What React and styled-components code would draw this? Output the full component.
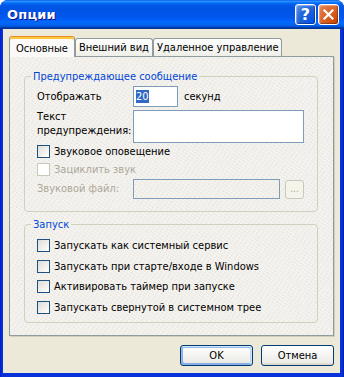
import React from 'react'
import styled, { createGlobalStyle } from 'styled-components'

const GlobalStyle = createGlobalStyle`
  html, body { margin: 0; padding: 0; background: #fff; }
  body {
    font-family: Tahoma, "DejaVu Sans Condensed", "Liberation Sans", sans-serif;
    font-size: 11px;
    color: #000;
  }
`

const Window = styled.div`
  width: 344px;
  height: 377px;
  box-sizing: border-box;
  display: flex;
  flex-direction: column;
  background: linear-gradient(to right, #0019cf 0, #0831d9 2px, #0831d9 calc(100% - 2px), #001ea0 100%);
  border-radius: 8px 8px 0 0;
  overflow: hidden;
`

const TitleBar = styled.div`
  height: 29px;
  flex: none;
  display: flex;
  align-items: center;
  padding: 0 5px 0 7px;
  background: linear-gradient(180deg, #0058ee 0%, #3593ff 4%, #288eff 6%, #127dff 8%, #036ffc 10%, #0262ee 14%, #0057e5 20%, #0054e3 24%, #0055eb 56%, #005bf5 66%, #026afe 76%, #0062ef 86%, #0052d6 92%, #0040ab 94%, #003092 100%);
`

const Title = styled.div`
  flex: 1;
  color: #fff;
  font-family: "DejaVu Sans", sans-serif;
  font-weight: bold;
  font-size: 13px;
  letter-spacing: 0.2px;
  text-shadow: 1px 1px #0f1089;
`

const CaptionButton = styled.button`
  width: 21px;
  height: 21px;
  margin-left: 2px;
  padding: 0;
  border: 1px solid #fff;
  border-radius: 3px;
  display: flex;
  align-items: center;
  justify-content: center;
  color: #fff;
  font-family: "DejaVu Sans", sans-serif;
  font-weight: bold;
  font-size: 16px;
  background: ${p => p.$close
    ? 'radial-gradient(circle at 90% 90%, #cc4600 0%, #dc6527 55%, #e08a5e 100%)'
    : 'radial-gradient(circle at 90% 90%, #0054e9 0%, #2263d5 55%, #6696eb 100%)'};
  box-shadow: inset -1px -1px 1px rgba(0, 0, 40, 0.35), inset 1px 1px 1px rgba(255, 255, 255, 0.35);
`

const Body = styled.div`
  flex: 1;
  margin: 0 4px 4px 3px;
  background: #ece9d8;
  padding: 7px 6px 7px 6px;
  display: flex;
  flex-direction: column;
`

const TabStrip = styled.div`
  display: flex;
  align-items: flex-end;
  height: 21px;
  margin-bottom: -1px;
  position: relative;
  z-index: 1;
`

const Tab = styled.div`
  box-sizing: border-box;
  height: ${p => (p.$active ? 21 : 18)}px;
  margin-bottom: ${p => (p.$active ? 0 : 1)}px;
  padding: 0 ${p => (p.$active ? 6 : 3)}px;
  display: flex;
  align-items: center;
  border: 1px solid #919b9c;
  border-bottom: none;
  border-radius: 3px 3px 0 0;
  background: ${p => (p.$active ? '#fbfaf8' : 'linear-gradient(180deg, #fff 0%, #fafaf9 26%, #f0f0ea 95%, #ecebe6 100%)')};
  ${p => p.$active && `
    border-top: 1px solid #e68b2c;
    box-shadow: inset 0 2px #ffc83c;
    padding-top: 2px;
  `}
`

const Panel = styled.div`
  flex: 1;
  box-sizing: border-box;
  border: 1px solid #919b9c;
  box-shadow: 1px 1px 0 #d0cebf;
  background-color: #f5f3ef;
  background-image:
    repeating-linear-gradient(35deg, rgba(120, 110, 90, 0.05) 0 1px, transparent 1px 3px),
    repeating-linear-gradient(-55deg, rgba(120, 110, 90, 0.04) 0 1px, transparent 1px 4px);
  padding: 13px 15px 0 14px;
  display: flex;
  flex-direction: column;
  gap: 6px;
`

const Group = styled.fieldset`
  margin: 0;
  border: 1px solid #d0d0bf;
  border-radius: 4px;
  padding: ${p => p.$pad};
  display: flex;
  flex-direction: column;
`

const Legend = styled.legend`
  color: #0046d5;
  padding: 0 2px;
  margin-left: -6px;
  line-height: 13px;
`

const FieldRow = styled.div`
  display: flex;
  align-items: ${p => (p.$top ? 'flex-start' : 'center')};
  margin-top: ${p => p.$mt || 0}px;
`

const FieldLabel = styled.div`
  width: 96px;
  flex: none;
  line-height: 14px;
  color: ${p => (p.$disabled ? '#aca899' : '#000')};
`

const Input = styled.div`
  box-sizing: border-box;
  width: ${p => p.$w}px;
  height: ${p => p.$h}px;
  border: 1px solid #7f9db9;
  background: ${p => (p.$disabled ? 'transparent' : '#fff')};
  padding: 3px 2px;
  display: flex;
  align-items: flex-start;
`

const Selected = styled.span`
  background: #316ac5;
  color: #fff;
  line-height: 13px;
`

const Unit = styled.span`
  margin-left: 6px;
`

const SmallButton = styled.div`
  box-sizing: border-box;
  width: 19px;
  height: 19px;
  margin-left: 5px;
  border: 1px solid #cac8bb;
  border-radius: 3px;
  background: #f5f4ea;
  color: #aca899;
  display: flex;
  align-items: center;
  justify-content: center;
  font-size: 10px;
  padding-bottom: 2px;
`

const CheckRow = styled.label`
  display: flex;
  align-items: center;
  height: 13px;
  margin-top: ${p => p.$mt || 0}px;
  color: ${p => (p.$disabled ? '#aca899' : '#000')};
`

const Box = styled.span`
  box-sizing: border-box;
  width: 13px;
  height: 13px;
  margin-right: 4px;
  flex: none;
  border: 1px solid ${p => (p.$disabled ? '#cac8bb' : '#1c5180')};
  background: ${p => (p.$disabled ? '#fff' : 'linear-gradient(135deg, #dcdcd7 0%, #fff 100%)')};
`

const Footer = styled.div`
  display: flex;
  justify-content: flex-end;
  gap: 8px;
  margin-top: 9px;
`

const Button = styled.button`
  box-sizing: border-box;
  width: 73px;
  height: 21px;
  border: 1px solid #003c74;
  border-radius: 3px;
  font: inherit;
  color: #000;
  background: linear-gradient(180deg, #fff 0%, #ecebe6 86%, #d6d0c5 100%);
  box-shadow: ${p => p.$default
    ? 'inset -1px 1px #cee7ff, inset 1px 2px #98b8ea, inset -2px 2px #bcd4f6, inset 1px -1px #89ade4, inset 2px -2px #89ade4'
    : 'none'};
`

const Check = ({ children, disabled, mt }) => (
  <CheckRow $disabled={disabled} $mt={mt}>
    <Box $disabled={disabled} />
    {children}
  </CheckRow>
)

export default function App() {
  return (
    <>
      <GlobalStyle />
      <Window>
        <TitleBar>
          <Title>Опции</Title>
          <CaptionButton>?</CaptionButton>
          <CaptionButton $close>
            <svg width="11" height="11" viewBox="0 0 11 11">
              <path d="M1.5 1.5 L9.5 9.5 M9.5 1.5 L1.5 9.5" stroke="#fff" strokeWidth="2.2" strokeLinecap="square" />
            </svg>
          </CaptionButton>
        </TitleBar>
        <Body>
          <TabStrip>
            <Tab $active>Основные</Tab>
            <Tab>Внешний вид</Tab>
            <Tab>Удаленное управление</Tab>
          </TabStrip>
          <Panel>
            <Group $pad="3px 13px 12px 12px">
              <Legend>Предупреждающее сообщение</Legend>
              <FieldRow>
                <FieldLabel>Отображать</FieldLabel>
                <Input $w={45} $h={21}><Selected>20</Selected></Input>
                <Unit>секунд</Unit>
              </FieldRow>
              <FieldRow $top $mt={3}>
                <FieldLabel>Текст<br />предупреждения:</FieldLabel>
                <Input $w={171} $h={33} />
              </FieldRow>
              <Check mt={2}>Звуковое оповещение</Check>
              <Check disabled mt={5}>Зациклить звук</Check>
              <FieldRow $mt={3}>
                <FieldLabel $disabled>Звуковой файл:</FieldLabel>
                <Input $w={147} $h={20} $disabled />
                <SmallButton>...</SmallButton>
              </FieldRow>
            </Group>
            <Group $pad="8px 13px 8px 12px">
              <Legend>Запуск</Legend>
              <Check>Запускать как системный сервис</Check>
              <Check mt={8}>Запускать при старте/входе в Windows</Check>
              <Check mt={7}>Активировать таймер при запуске</Check>
              <Check mt={8}>Запускать свернутой в системном трее</Check>
            </Group>
          </Panel>
          <Footer>
            <Button $default>OK</Button>
            <Button>Отмена</Button>
          </Footer>
        </Body>
      </Window>
    </>
  )
}
